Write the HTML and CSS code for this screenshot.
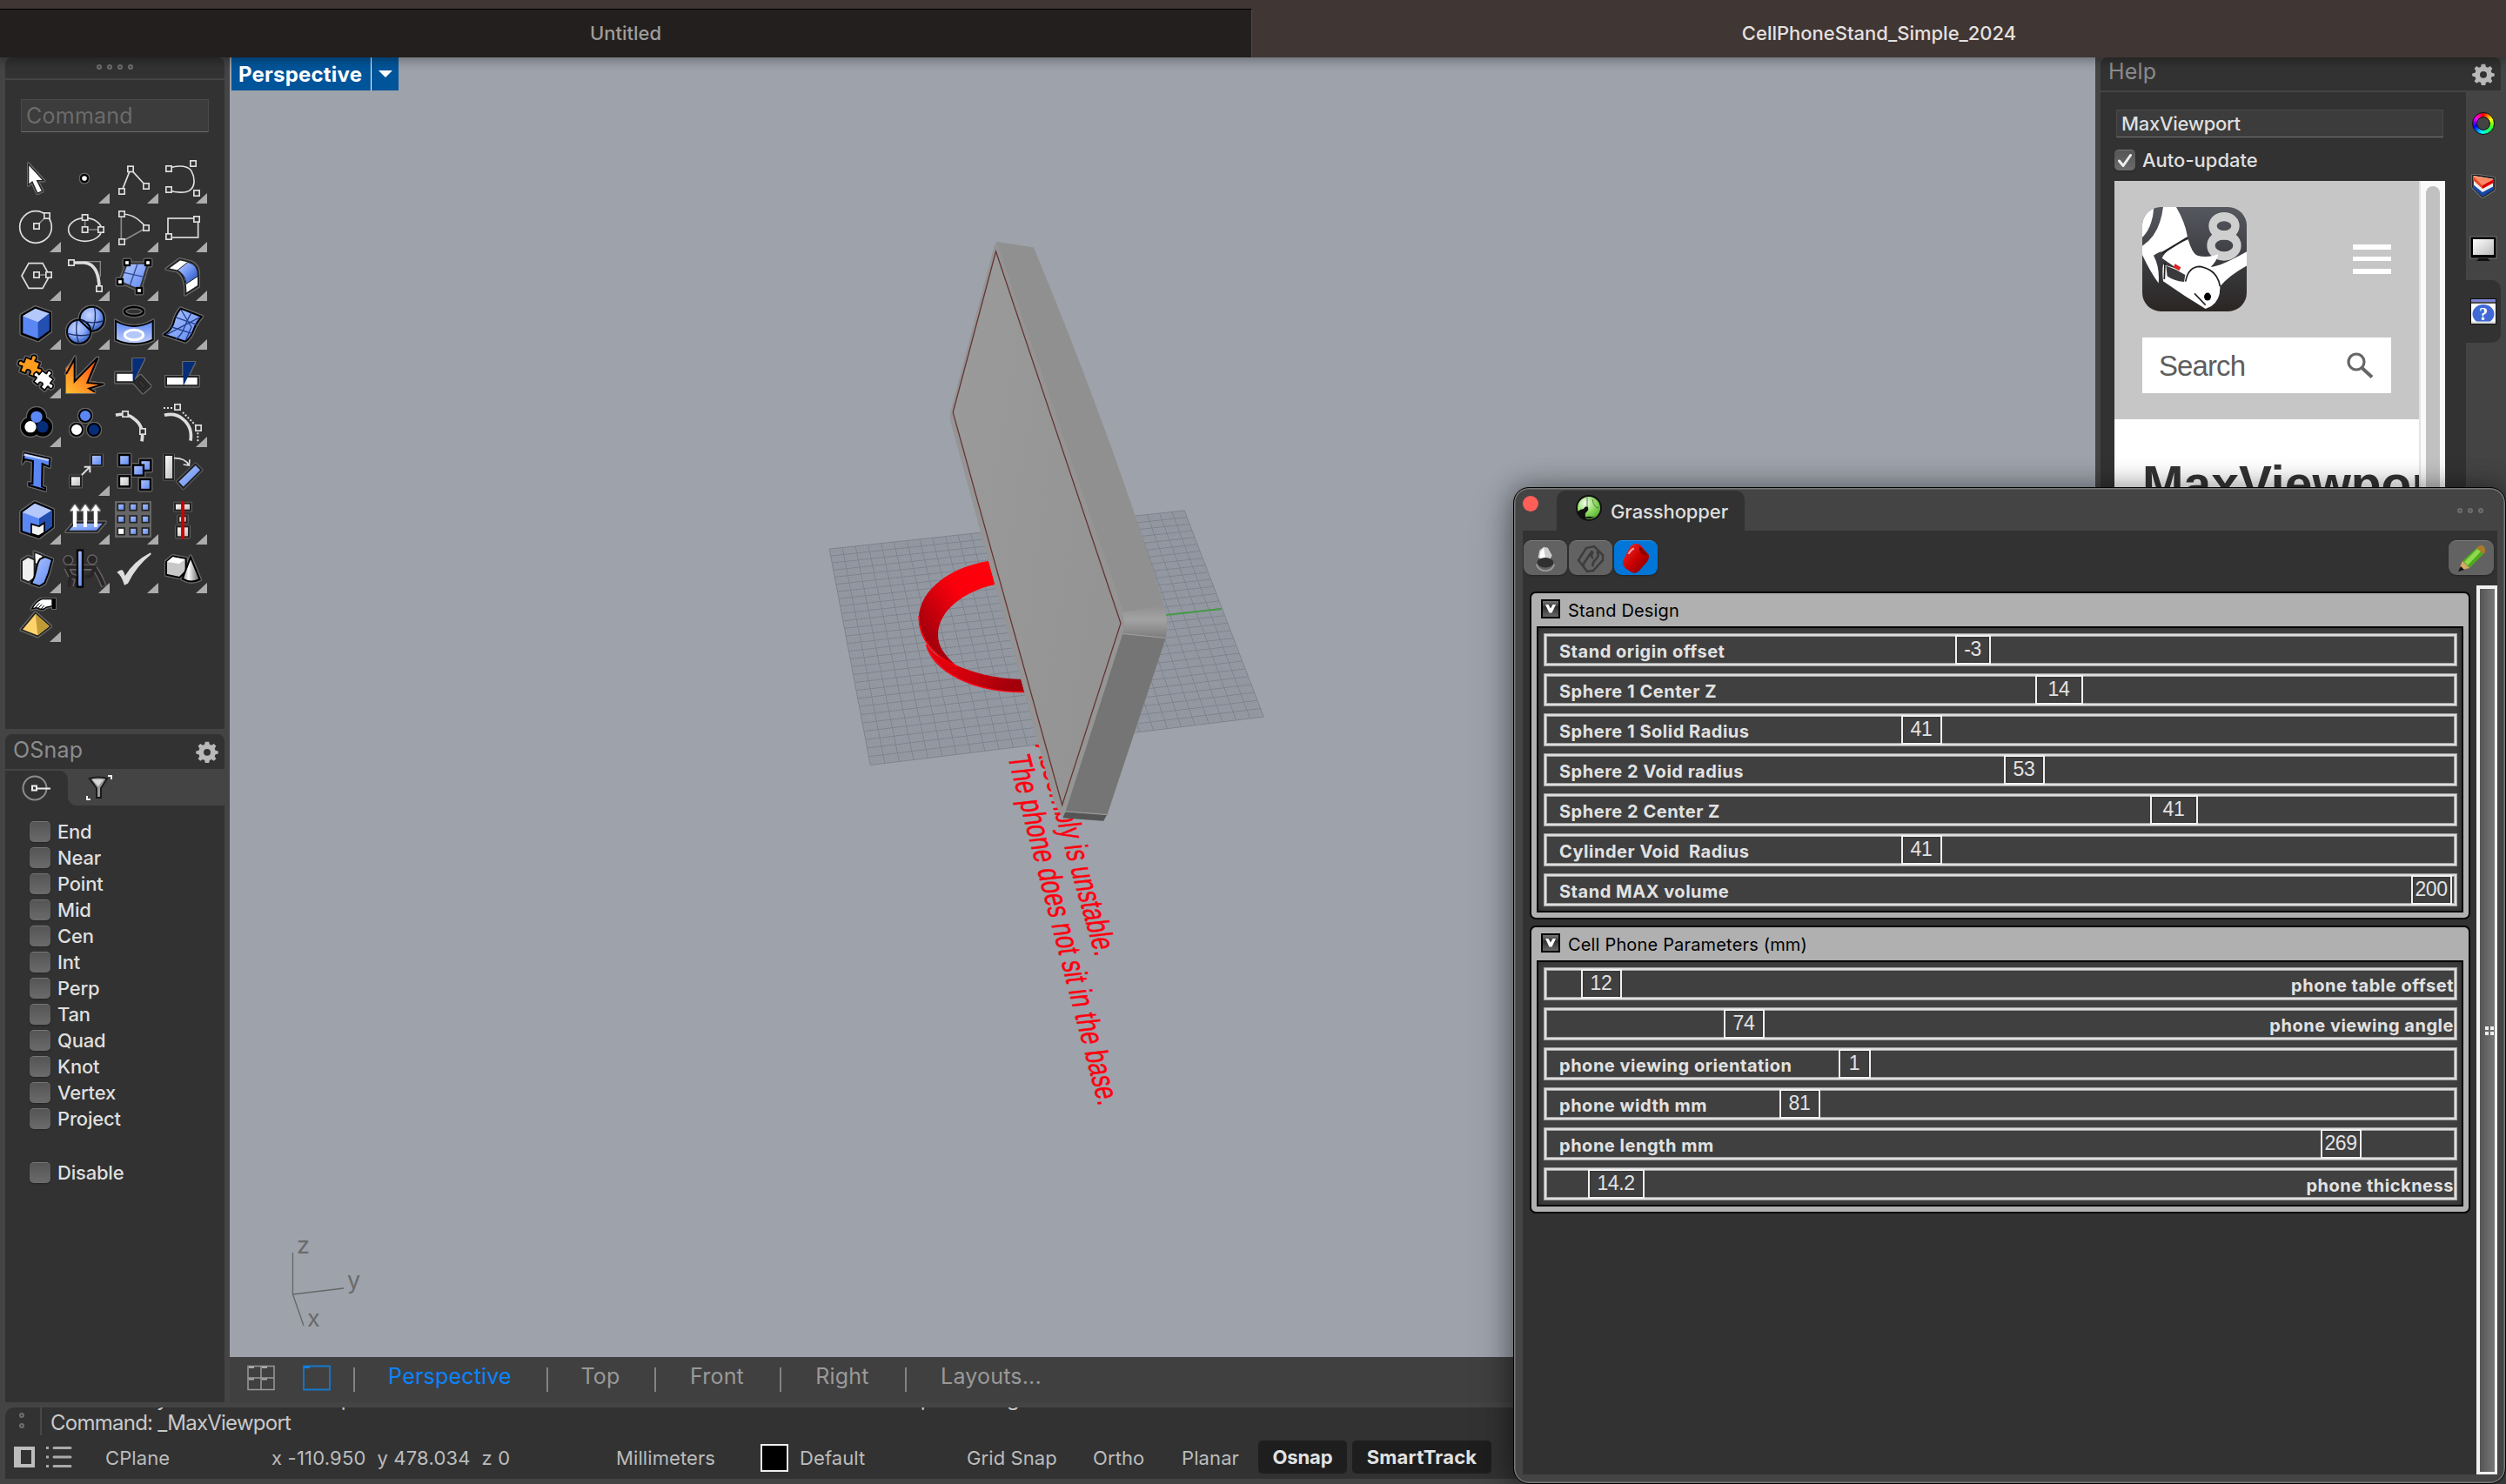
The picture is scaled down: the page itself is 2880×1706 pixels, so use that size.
FILE: index.html
```html
<!DOCTYPE html>
<html lang="en">
<head>
<meta charset="utf-8">
<title>CellPhoneStand_Simple_2024</title>
<link rel="stylesheet" href="styles.css">
</head>
<body>
<svg class="defs" width="0" height="0" aria-hidden="true">
  <defs>
    <rect id="n" x="-9.5" y="-9.5" width="19" height="19" fill="#323232" stroke="#dedede" stroke-width="5"/>
    <rect id="k" x="-9" y="-9" width="18" height="18" fill="#fff" stroke="#000" stroke-width="7"/>
    <linearGradient id="blue" x1="0" y1="0" x2="1" y2="1"><stop offset="0" stop-color="#b4c8fb"/><stop offset="1" stop-color="#5b87f5"/></linearGradient>
    <linearGradient id="bluev" x1="0" y1="0" x2="0" y2="1"><stop offset="0" stop-color="#5b87f5"/><stop offset="1" stop-color="#c4d2fb"/></linearGradient>
    <linearGradient id="deep" x1="0" y1="0" x2="1" y2="1"><stop offset="0" stop-color="#c4d2fb"/><stop offset=".5" stop-color="#6c92f3"/><stop offset="1" stop-color="#1d48a8"/></linearGradient>
    <radialGradient id="ball" cx=".4" cy=".35" r=".7"><stop offset="0" stop-color="#c8d6fd"/><stop offset=".5" stop-color="#8dabfa"/><stop offset="1" stop-color="#2450b4"/></radialGradient>
    <linearGradient id="grey" x1="0" y1="0" x2="1" y2="1"><stop offset="0" stop-color="#fff"/><stop offset="1" stop-color="#bbb"/></linearGradient>
    <linearGradient id="cone" x1="0" y1="0" x2="1" y2="0"><stop offset="0" stop-color="#888"/><stop offset=".35" stop-color="#fff"/><stop offset="1" stop-color="#555"/></linearGradient>
    <linearGradient id="fire" x1="0" y1="1" x2="1" y2="0"><stop offset="0" stop-color="#ffc030"/><stop offset=".5" stop-color="#ff7a20"/><stop offset="1" stop-color="#f03010"/></linearGradient>
    <path id="piece" d="M-24-24H-8C-3-24-11-32-7-37C-4-41 4-41 7-37C11-32 3-24 8-24H24V-8C24-3 32-11 37-7C41-4 41 4 37 7C32 11 24 3 24 8V24H8C3 24 10 16 6 12C3 9-3 9-6 12C-10 16-3 24-8 24H-24V8C-24 3-32 11-37 7C-41 4-41-4-37-7C-32-11-24-3-24-8Z"/>
    <path id="chev" d="M0 0h3.500L6 4.500 8.500 0H12L7.500 9.500h-3z"/>
  </defs>
</svg>

<header class="titlebar">
  <div class="doc-tab doc-tab-idle">Untitled</div>
  <div class="doc-tab">CellPhoneStand_Simple_2024</div>
</header>

<main class="workspace">
  <aside class="left">
    <section class="panel tools">
      <div class="grip"><i></i><i></i><i></i><i></i></div>
      <div class="tools-body">
        <div class="cmd-input">Command</div>
        <div class="tool-grid">
          <div class="tool"><svg viewBox="42 534 168 168" class="halo"><path d="M98 566v72l13-11 18 40 17-8-18-36h22z" fill="#fff" stroke="#222" stroke-width="4"/></svg></div>
          <div class="tool more"><svg viewBox="210 534 168 168" class="halo"><circle cx="291" cy="615" r="12" fill="#fff" stroke="#000" stroke-width="7"/></svg></div>
          <div class="tool more"><svg viewBox="378 534 168 168"><path d="M420 659l30-76 54 59" fill="none" stroke="#dedede" stroke-width="5"/><use href="#n" x="420" y="660"/><use href="#n" x="450" y="583"/><use href="#n" x="504" y="642"/></svg></div>
          <div class="tool more"><svg viewBox="546 534 168 168"><path d="M582 580C620 568 650 572 660 590C672 612 674 640 656 655C640 668 605 664 582 656" fill="none" stroke="#dedede" stroke-width="5"/><use href="#n" x="582" y="582"/><use href="#n" x="666" y="564"/><use href="#n" x="582" y="654"/><use href="#n" x="678" y="666"/></svg></div>

          <div class="tool more"><svg viewBox="42 702 168 168"><path d="M126 780l36-36" stroke="#888" stroke-width="5"/><circle cx="123" cy="783" r="55" fill="none" stroke="#dedede" stroke-width="5"/><use href="#n" x="126" y="780"/><use href="#n" x="162" y="744"/></svg></div>
          <div class="tool more"><svg viewBox="210 702 168 168"><ellipse cx="293" cy="792" rx="57" ry="40" fill="none" stroke="#dedede" stroke-width="5"/><path d="M293 750v42h54" fill="none" stroke="#888" stroke-width="5"/><use href="#n" x="293" y="750"/><use href="#n" x="293" y="792"/><use href="#n" x="348" y="792"/></svg></div>
          <div class="tool more"><svg viewBox="378 702 168 168"><path d="M418 738v96l86-48" fill="none" stroke="#888" stroke-width="5"/><path d="M420 738Q470 738 504 786" fill="none" stroke="#dedede" stroke-width="5"/><use href="#n" x="420" y="738"/><use href="#n" x="420" y="834"/><use href="#n" x="504" y="786"/></svg></div>
          <div class="tool more"><svg viewBox="546 702 168 168"><rect x="579" y="753" width="104" height="66" fill="none" stroke="#dedede" stroke-width="5"/><use href="#n" x="678" y="756"/><use href="#n" x="582" y="816"/></svg></div>

          <div class="tool more"><svg viewBox="42 870 168 168"><path d="M75 951l24-43h48l24 43-24 43H99z" fill="none" stroke="#dedede" stroke-width="5"/><path d="M126 948h40" stroke="#888" stroke-width="5"/><use href="#n" x="126" y="948"/><use href="#n" x="168" y="948"/></svg></div>
          <div class="tool more"><svg viewBox="210 870 168 168"><path d="M290 902h56v52" fill="none" stroke="#888" stroke-width="4"/><path d="M246 906h44Q342 910 342 996" fill="none" stroke="#dedede" stroke-width="11"/><use href="#n" x="246" y="906"/><use href="#n" x="342" y="996"/></svg></div>
          <div class="tool more"><svg viewBox="378 870 168 168" class="halo"><path d="M438 908h72l-28 92-68-28z" fill="url(#blue)" stroke="#333" stroke-width="6"/><path d="M474 910l-26 74M428 940l72 16" stroke="#334a90" stroke-width="4"/><use href="#k" x="438" y="906"/><use href="#k" x="510" y="906"/><use href="#k" x="414" y="972"/><use href="#k" x="480" y="1002"/></svg></div>
          <div class="tool more"><svg viewBox="546 870 168 168" class="halo"><path d="M577 927L620 895L658 904Q685 916 684 950V986L640 1014Q642 950 612 934Z" fill="#fff" stroke="#222" stroke-width="6"/><path d="M612 932L648 904Q684 914 682 953L642 979Q640 948 612 932z" fill="url(#deep)" stroke="#222" stroke-width="3"/></svg></div>

          <div class="tool more"><svg viewBox="42 1038 168 168" class="halo"><path d="M75 1088l47-27 51 19v61l-42 31-56-21z" fill="#5b87f5" stroke="#000" stroke-width="8"/><path d="M78 1090l44-26 48 17-39 30z" fill="#b4c8fb"/><path d="M131 1111l39-30v58l-39 29z" fill="#234fb0"/></svg></div>
          <div class="tool more"><svg viewBox="210 1038 168 168" class="halo"><circle cx="317" cy="1100" r="42" fill="url(#ball)" stroke="#000" stroke-width="6"/><circle cx="272" cy="1144" r="41" fill="url(#ball)" stroke="#000" stroke-width="6"/><path d="M274 1104l42 40" stroke="#000" stroke-width="6"/><path d="M278 1105q40 14 78 2M326 1060q8 40-8 80M232 1150q40 12 78 4M266 1106q-8 40 6 78" fill="none" stroke="#1b2f66" stroke-width="4"/></svg></div>
          <div class="tool more"><svg viewBox="378 1038 168 168" class="halo"><ellipse cx="462" cy="1074" rx="33" ry="15" fill="none" stroke="#000" stroke-width="7"/><path d="M399 1107q63 36 128 0v65q-63 28-128 0z" fill="url(#bluev)" stroke="#000" stroke-width="6"/><ellipse cx="462" cy="1155" rx="32" ry="17" fill="#b4c8fb" stroke="#fff" stroke-width="9"/></svg></div>
          <div class="tool more"><svg viewBox="546 1038 168 168" class="halo"><path d="M623 1064l72 28q-20 24-26 42-10 30-30 44l-72-24q26-18 32-42 6-26 24-48z" fill="url(#blue)" stroke="#000" stroke-width="6"/><path d="M660 1078q-14 24-24 50-8 26-30 42M604 1094l76 26M592 1128l70 22M690 1094l-116 60M624 1068l36 60-20 46" fill="none" stroke="#23408c" stroke-width="4"/></svg></div>

          <div class="tool more"><svg viewBox="42 6 168 168" class="halo"><g stroke="#000" stroke-width="5"><use href="#piece" fill="#ff9d1e" transform="translate(104 66) rotate(22) scale(1.08)"/><use href="#piece" fill="#fff" transform="translate(150 112) rotate(38)"/></g></svg></div>
          <div class="tool"><svg viewBox="210 6 168 168" class="halo"><path d="M228 156V72l30-36-2 78 84-84-34 86 54 8-50 16 18 16z" fill="url(#fire)"/><path d="M228 90l29-52v78l80-82-36 86 56 5-50 15 20 12" fill="none" stroke="#000" stroke-width="6"/></svg></div>
          <div class="tool"><svg viewBox="378 6 168 168" class="halo"><path d="M400 86h62v32h-62z" fill="#fff" stroke="#222" stroke-width="6"/><path d="M485 96l32 36-24 22-32-36zM485 108l20 24-11 10-20-24z" fill="#323232" stroke="#222" stroke-width="5"/><path d="M457 36h42l-41 84z" fill="#052d78"/></svg></div>
          <div class="tool"><svg viewBox="546 6 168 168" class="halo"><path d="M573 99h110v31H573z" fill="#fff" stroke="#222" stroke-width="6"/><path d="M631 48h42l-41 84z" fill="#052d78"/></svg></div>

          <div class="tool more"><svg viewBox="42 174 168 168" class="halo"><g fill="#000"><circle cx="126" cy="238" r="33"/><circle cx="105" cy="272" r="33"/><circle cx="147" cy="272" r="33"/></g><circle cx="105" cy="272" r="20" fill="#fff"/><circle cx="147" cy="272" r="20" fill="#052d78"/><circle cx="126" cy="238" r="20" fill="#5b87f5"/></svg></div>
          <div class="tool"><svg viewBox="210 174 168 168" class="halo"><g stroke="#000" stroke-width="6"><circle cx="294" cy="234" r="21" fill="#5b87f5"/><circle cx="264" cy="282" r="21" fill="#fff"/><circle cx="324" cy="282" r="21" fill="#052d78"/></g></svg></div>
          <div class="tool"><svg viewBox="378 174 168 168"><path d="M399 232q36-10 60 10 40 26 30 80" fill="none" stroke="#dedede" stroke-width="11"/><use href="#n" x="432" y="228"/><use href="#n" x="492" y="288"/></svg></div>
          <div class="tool more"><svg viewBox="546 174 168 168"><path d="M567 232q36-10 62 12 36 28 28 76" fill="none" stroke="#dedede" stroke-width="11"/><path d="M564 207h36M630 222l50 50M682 292v36" fill="none" stroke="#dedede" stroke-width="6" stroke-dasharray="6 6"/><use href="#n" x="612" y="204"/><use href="#n" x="684" y="276"/></svg></div>

          <div class="tool"><svg viewBox="42 342 168 168" class="halo"><path d="M84 362l88 20-2 28-24-10-2 78 12 4v8l-56-16v-8l12 2 2-78-28-6-6 8z" fill="#5b87f5" stroke="#000" stroke-width="6"/><path d="M84 364l86 20-4 6-84-18z" fill="#c4d2fb"/></svg></div>
          <div class="tool more"><svg viewBox="210 342 168 168"><g class="halo"><rect x="243" y="442" width="36" height="36" fill="url(#grey)" stroke="#222" stroke-width="6"/><rect x="315" y="369" width="36" height="36" fill="url(#blue)" stroke="#222" stroke-width="6"/></g><path d="M282 438l28-28M290 410h20v20" fill="none" stroke="#dedede" stroke-width="6"/></svg></div>
          <div class="tool"><svg viewBox="378 342 168 168" class="halo"><g stroke="#000" stroke-width="7" fill="url(#blue)"><rect x="411" y="369" width="36" height="36"/><rect x="484" y="387" width="36" height="36"/><rect x="459" y="404" width="36" height="36"/><rect x="411" y="442" width="36" height="36" fill="url(#grey)"/><rect x="483" y="453" width="36" height="36"/></g></svg></div>
          <div class="tool"><svg viewBox="546 342 168 168"><g class="halo" stroke="#222" stroke-width="6"><path d="M567 369h30v84h-30z" fill="url(#grey)"/><path d="M674 401l20 20-62 62-20-22z" fill="url(#blue)"/></g><path d="M600 380q40 0 50 24M632 402l20 3 2-20" fill="none" stroke="#dedede" stroke-width="5"/></svg></div>

          <div class="tool more"><svg viewBox="42 510 168 168" class="halo"><path d="M74 566l46-33 62 26v58l-48 36-60-20z" fill="#5b87f5" stroke="#000" stroke-width="7"/><path d="M77 567l43-31 58 24-44 28z" fill="#b4c8fb"/><path d="M135 588l44-28v56l-44 34z" fill="#234fb0"/><path d="M108 607l27 8 18-12v34l-20 12-25-8z" fill="#f2f2f2" stroke="#000" stroke-width="5"/></svg></div>
          <div class="tool more"><svg viewBox="210 510 168 168" class="halo"><path d="M232 632l26-30h102l-26 30z" fill="url(#blue)" stroke="#222" stroke-width="6"/><path d="M252 618v-56h-10l16-22 16 22h-10v56zM288 618v-56h-10l16-22 16 22h-10v56zM324 618v-56h-10l16-22 16 22h-10v56z" fill="#fff"/></svg></div>
          <div class="tool more"><svg viewBox="378 510 168 168"><rect x="396" y="528" width="126" height="126" fill="#666"/><g fill="url(#blue)" stroke="#222" stroke-width="5"><rect x="406" y="537" width="23" height="23"/><rect x="448" y="537" width="23" height="23"/><rect x="490" y="537" width="23" height="23"/><rect x="406" y="579" width="23" height="23"/><rect x="448" y="579" width="23" height="23"/><rect x="490" y="579" width="23" height="23"/><rect x="406" y="621" width="23" height="23" fill="#fff"/><rect x="448" y="621" width="23" height="23"/><rect x="490" y="621" width="23" height="23"/></g></svg></div>
          <div class="tool more"><svg viewBox="546 510 168 168"><g class="halo" fill="url(#grey)" stroke="#222" stroke-width="6"><rect x="603" y="536" width="54" height="24"/><rect x="616" y="580" width="28" height="22"/><rect x="609" y="616" width="42" height="36"/></g><path d="M624 528h12v132h-12z" fill="#c00"/></svg></div>

          <div class="tool more"><svg viewBox="42 678 168 168" class="halo"><path d="M119 704l30 12-14 36-16-10z" fill="#fff" stroke="#222" stroke-width="5"/><path d="M75 734l22-14 22 10v64l-20 14-24-10z" fill="#f0f0f0" stroke="#222" stroke-width="6"/><path d="M138 728l18-8 24 10q-6 20-12 44l-14 36-18 12-28-10q12-20 16-44 4-26 14-40z" fill="url(#blue)" stroke="#000" stroke-width="6"/></svg></div>
          <div class="tool more"><svg viewBox="210 678 168 168"><g stroke="#666" stroke-width="20" fill="none"><path d="M230 758l14 28 24 8-8 30M228 756l98 2 18 30 14 34"/></g><circle cx="235" cy="732" r="18" fill="#666"/><circle cx="318" cy="730" r="18" fill="#666"/><path d="M230 758l14 28 24 8-8 30M228 756h98l-12 30-20 4M326 758l16 28 16 34M242 790l-4 34" stroke="#2a2526" stroke-width="12" fill="none"/><circle cx="235" cy="732" r="14" fill="#2a2526"/><circle cx="318" cy="730" r="14" fill="#2a2526"/><path d="M267 698h18v126h-18z" fill="url(#blue)" stroke="#000" stroke-width="7"/></svg></div>
          <div class="tool more"><svg viewBox="378 678 168 168"><path d="M403 774q10-10 18-8 6 4 10 20 30-50 88-80l2 6q-50 40-80 100l-12 6q-10-34-26-44z" fill="#dedede"/></svg></div>
          <div class="tool more"><svg viewBox="546 678 168 168" class="halo"><path d="M573 738l22-20 46 8v44l-22 22-46-10z" fill="#c8c8c8" stroke="#000" stroke-width="6"/><path d="M575 738l20-17 43 8-20 15z" fill="#fff"/><path d="M657 722l32 76q-30 16-60-2z" fill="url(#cone)" stroke="#000" stroke-width="6"/></svg></div>

          <div class="tool more"><svg viewBox="42 846 168 168" class="halo"><path d="M110 900q14-26 34-34h36v24l-20 4q-14 14-34 2z" fill="#fff" stroke="#000" stroke-width="4"/><path d="M120 898l16-18M130 900l14-16M142 900l10-12" stroke="#000" stroke-width="3"/><path d="M180 864h12v36h-12z" fill="#000"/><path d="M122 914l52 46-44 34-56-22z" fill="#ffd36b" stroke="#222" stroke-width="5"/><path d="M122 916l48 44-40 30z" fill="#c09a35"/></svg></div>
        </div>
      </div>
    </section>

    <section class="panel osnap">
      <div class="panel-head"><span>OSnap</span><svg class="gear" viewBox="-15 -14 30 30"><path fill="#b9b9b9" d="M-2.500-12h5l.8 3.500 2.600 1.100L9-9.300l3 3-2 3.200 1.100 2.600 3.600.8v3.600l-3.600.8L10 7.300l2 3.100-3 3-3.100-2-2.600 1.100-.8 3.500h-5l-.8-3.500-2.600-1.100-3.100 2-3-3 2-3.100-1.100-2.600-3.600-.8V.3l3.600-.8L-10-3.100l-2-3.200 3-3 3.100 1.900 2.600-1.100z"/><circle cy="2" r="4.600" fill="#323232"/></svg></div>
      <div class="osnap-tabs">
        <div class="osnap-tab"><svg width="34" height="30" viewBox="0 0 34 30"><circle cx="15" cy="15" r="13.500" fill="none" stroke="#8c8c8c" stroke-width="2"/><path d="M16 15.500h17" stroke="#eee" stroke-width="2"/><rect x="12" y="12.500" width="5" height="5" fill="#323232" stroke="#eee" stroke-width="2"/></svg></div>
        <div class="osnap-tab-idle"><svg width="30" height="30" viewBox="0 0 30 30"><path d="M25 1h4v4M1 24v4h4" fill="none" stroke="#eee" stroke-width="2"/><path d="M4 4q10-3 20 0l-7 11v11h-5V15z" fill="#9a9a9a" stroke="#1a1a1a" stroke-width="2"/><path d="M7 5h13l-6 8z" fill="#d8d8d8"/></svg></div>
      </div>
      <ul class="snaps">
        <li><i></i>End</li><li><i></i>Near</li><li><i></i>Point</li><li><i></i>Mid</li><li><i></i>Cen</li><li><i></i>Int</li>
        <li><i></i>Perp</li><li><i></i>Tan</li><li><i></i>Quad</li><li><i></i>Knot</li><li><i></i>Vertex</li><li><i></i>Project</li>
        <li class="disable"><i></i>Disable</li>
      </ul>
    </section>
  </aside>

  <section class="center">
    <div class="viewport">
      <svg class="scene" viewBox="264 66 2144 1494">
        <defs>
          <linearGradient id="face" x1="0" y1="0" x2="1" y2=".5"><stop offset="0" stop-color="#9b9b9b"/><stop offset=".5" stop-color="#979797"/><stop offset="1" stop-color="#949494"/></linearGradient>
          <linearGradient id="fillet" x1="0" y1="0" x2="0" y2="1"><stop offset="0" stop-color="#8f8f8f"/><stop offset=".45" stop-color="#a3a3a3"/><stop offset="1" stop-color="#7c7c7c"/></linearGradient>
          <linearGradient id="ring" x1=".9" y1="0" x2=".15" y2=".75"><stop offset="0" stop-color="#ff000c"/><stop offset=".45" stop-color="#fa000c"/><stop offset="1" stop-color="#a6000c"/></linearGradient>
          <linearGradient id="ring2" x1="0" y1="0" x2="1" y2=".6"><stop offset="0" stop-color="#f0000c"/><stop offset=".6" stop-color="#d0000c"/><stop offset="1" stop-color="#a4000c"/></linearGradient>
        </defs>
        <path class="ground" d="M953.200 631.100L1361.100 587L1452.200 824L1000.300 879.500Z"/>
        <path class="grid-minor"/>
        <path class="grid-major"/>
        <path d="M1338 707.300L1403.600 700" stroke="#469a46" stroke-width="2"/>
        <path d="M1136 645C1095 651 1056 677 1056 711C1056 737 1076 756 1100 766C1086 754 1078 743 1078 730C1078 701 1110 679 1143.500 672Z" fill="url(#ring)"/>
        <path d="M1064.500 739C1073 772 1118 796 1177.500 795.500L1173.600 781C1142 780 1117 773 1097 764C1080 757 1070 750 1064.500 739Z" fill="url(#ring2)"/>
        <path d="M1056 708C1056 737 1076 756 1100 766M1064.500 741C1073 772 1118 796 1177.500 795.500" fill="none" stroke="#ff0010" stroke-width="1.500"/>
        <text class="warn" transform="matrix(.181 .697 -.993 .11 1158 869)">The phone does not sit in the base.</text>
        <text class="warn" transform="matrix(.193 .682 -.993 .11 1190 856)">Assembly is unstable.</text>
        <path d="M1145.700 278L1187.800 284.400C1230 385 1290 540 1337.800 695.400Q1343 714 1339.700 733.500L1272.300 936L1268.100 943.800L1221.400 940.200L1211.900 922.700L1093.200 486.500Q1091.500 480 1092.100 475L1141.800 286.700Q1143 280 1145.700 278Z" fill="#909090"/>
        <path d="M1145.700 278L1148.500 287L1291 703L1291.500 727L1224.500 933.300L1221.400 940.200L1211.900 922.700L1093.200 486.500Q1091.500 480 1092.100 475L1141.800 286.700Z" fill="#959595"/>
        <path d="M1144.500 289L1095.200 474.100L1220.700 925.500L1288 716.500Z" fill="url(#face)" stroke="#663535" stroke-width="1.300"/>
        <path d="M1290 704L1337.800 695.400Q1343 714 1339.700 733.500L1290.300 728.500Q1293 716 1290 704Z" fill="url(#fillet)"/>
        <path d="M1290.300 728.500L1339.700 733.500L1272.300 937L1224.500 933.300Z" fill="#757575"/>
        <path d="M1224.500 933.300L1272 937L1268.100 943.800L1221.400 940.200Z" fill="#555"/>
        <path d="M1290.300 728.500L1339.700 733.500M1224.500 932.800L1272 936.500" stroke="#a2a2a2" stroke-width="1"/>
        <path d="M336.500 1440V1488L395 1481M336.500 1488L349 1524" fill="none" stroke="#666" stroke-width="1.300"/>
        <g class="axis"><text x="341" y="1441">z</text><text x="399" y="1481">y</text><text x="353" y="1525">x</text></g>
      </svg>
      <div class="view-label"><b>Perspective</b><span><svg width="16" height="8" viewBox="0 0 16 8"><path d="M0 0h16L8 8z" fill="#fff"/></svg></span></div>
    </div>
    <nav class="view-tabs">
      <svg class="vt-icon" width="32" height="30" viewBox="0 0 32 30"><path d="M1 1.500h30v27H1zM16 1v28M1 15h30" fill="none" stroke="#999" stroke-width="1.500"/><path d="M2 3h6M17 3h6M2 16.500h6M17 16.500h6" stroke="#aaa" stroke-width="2"/></svg>
      <svg class="vt-icon blue" width="32" height="30" viewBox="0 0 32 30"><path d="M1 1.500h30v27H1z" fill="none" stroke="#1478cc" stroke-width="1.800"/><path d="M2 3h6" stroke="#0a84ff" stroke-width="2"/></svg>
      <i></i><span class="on">Perspective</span><i></i><span>Top</span><i></i><span>Front</span><i></i><span>Right</span><i></i><span>Layouts...</span>
    </nav>
  </section>

  <aside class="right">
    <div class="panel-head help-head"><span>Help</span><svg class="gear" viewBox="-15 -14 30 30"><path fill="#b9b9b9" d="M-2.500-12h5l.8 3.500 2.600 1.100L9-9.300l3 3-2 3.200 1.100 2.600 3.600.8v3.600l-3.600.8L10 7.300l2 3.100-3 3-3.100-2-2.600 1.100-.8 3.500h-5l-.8-3.500-2.600-1.100-3.100 2-3-3 2-3.100-1.100-2.600-3.600-.8V.3l3.600-.8L-10-3.100l-2-3.200 3-3 3.100 1.900 2.600-1.100z"/><circle cy="2" r="4.600" fill="#323232"/></svg></div>
    <div class="help">
      <div class="help-body">
        <div class="help-input">MaxViewport</div>
        <div class="auto"><i><svg width="16" height="15" viewBox="0 0 16 15"><path d="M1.500 8l4.500 5.500L14.500 1.500" fill="none" stroke="#eee" stroke-width="3" stroke-linecap="round"/></svg></i>Auto-update</div>
        <div class="web">
          <div class="page">
            <div class="page-head">
              <div class="brand">
                <svg width="120" height="120" viewBox="186 643 360 325" preserveAspectRatio="none">
                  <defs><linearGradient id="lg" x1="0" y1="0" x2="0" y2="1"><stop offset="0" stop-color="#56585f"/><stop offset=".5" stop-color="#3c3d42"/><stop offset="1" stop-color="#2a2624"/></linearGradient><clipPath id="lc"><rect x="186" y="643" width="360" height="325" rx="64" ry="58"/></clipPath></defs>
                  <g clip-path="url(#lc)">
                    <rect x="186" y="643" width="360" height="325" fill="url(#lg)"/>
                    <g fill="none" stroke="#cfcfcf" stroke-width="28"><ellipse cx="468" cy="702" rx="39" ry="29"/><ellipse cx="468" cy="763" rx="45" ry="33"/></g>
                    <path d="M186 643h40Q222 705 186 738z" fill="#fff"/>
                    <path d="M258 643h45q32 50 39 93L255 782q-10 0-30 12 22 38 17 86-28-34-56-88v-28Q246 730 258 643z" fill="#fff"/>
                    <path d="M344 744q14 44 32 50 34 8 72-4-4 20-26 40 34-2 124-48v44q-60 30-92 64 2 42-30 62l-20 8Q330 920 258 874q-4-30 0-52l50 14-54-34q14-30 90-58z" fill="#fff"/>
                    <path d="M268 826l34 12 32 16-4 22q-36-4-58-18z" fill="#3a3a3c"/>
                    <path d="M335 875Q345 828 385 828Q445 838 454 890M264 816l-2 52M342 738L254 788" fill="none" stroke="#222" stroke-width="5"/>
                    <path d="M366 912l38 36" stroke="#222" stroke-width="5"/><circle cx="411" cy="922" r="12" fill="#000"/>
                    <path d="M296 825l20 11" stroke="#d22" stroke-width="12"/>
                  </g>
                </svg>
                <svg class="burger" width="44" height="34" viewBox="0 0 44 34"><path d="M0 0h44v6H0zM0 14h44v5H0zM0 28h44v6H0z" fill="#fff"/></svg>
              </div>
              <div class="search"><span>Search</span><svg width="30" height="30" viewBox="0 0 30 30"><circle cx="11" cy="11" r="9" fill="none" stroke="#666" stroke-width="3.200"/><path d="M17.500 18L29 28.500" stroke="#666" stroke-width="4"/></svg></div>
            </div>
            <h1>MaxViewport</h1>
          </div>
          <div class="sbar"><i></i></div>
        </div>
      </div>
      <div class="side-tabs">
        <div><span class="wheel"></span></div>
        <div><svg width="26" height="26" viewBox="0 0 26 26" class="halo"><path d="M1 0l24 4v13L12 25 1 14z" fill="#eee" stroke="#111" stroke-width="1.500"/><path d="M1 1l24 4-13 7z" fill="#ff8a66"/><path d="M1 1l11 11v4L1 6z" fill="#e84a20"/><path d="M12 12l13-7v4l-13 7z" fill="#d00"/><path d="M1 11l11 9v5L1 15zM12 20l13-7v4l-13 8z" fill="#1747a6"/></svg></div>
        <div><svg width="32" height="31" viewBox="0 0 32 31"><rect x="1" y="1" width="30" height="25" fill="#000" stroke="#777"/><rect x="4" y="4" width="24" height="18" fill="url(#grey)"/><path d="M11 26h10l3 3H8z" fill="#111"/></svg></div>
        <div class="active"><svg width="30" height="30" viewBox="0 0 30 30"><rect x=".5" y=".5" width="29" height="29" fill="#fff" stroke="#111"/><rect x="1" y="1" width="28" height="3" fill="#7d83d6"/><path d="M1 5h28" stroke="#111" stroke-width="1.500"/><ellipse cx="15" cy="18" rx="12.500" ry="11" fill="#3f6ad6"/><rect x="1" y="26.500" width="28" height="2.500" fill="#ddd"/><text x="15" y="25" text-anchor="middle" class="q">?</text></svg></div>
      </div>
    </div>
  </aside>
</main>

<footer class="bottom">
  <div class="history">
    <div class="hgrip"><i></i><i></i></div>
    <div class="lines">
      <div class="old"><span>y</span><span>p</span><span>_</span><span>_Simple_Design</span></div>
      <div class="cur">Command: _MaxViewport</div>
    </div>
  </div>
  <div class="status">
    <svg class="s-pane" width="24" height="24" viewBox="0 0 24 24"><path d="M0 0h24v24H0zM8 4v16h12V4z" fill="#bdbdbd" fill-rule="evenodd"/></svg>
    <svg class="s-list" width="30" height="28" viewBox="0 0 30 28"><path d="M9 3.500h19M9 14h19M9 24.500h19" stroke="#aaa" stroke-width="3" stroke-linecap="round"/><path d="M0 3.500h3M0 14h3M0 24.500h3" stroke="#aaa" stroke-width="3"/></svg>
    <span class="s-cplane">CPlane</span><span class="s-xyz">x -110.950&nbsp; y 478.034&nbsp; z 0</span><span class="s-mm">Millimeters</span>
    <span class="s-layer"><i></i>Default</span><span class="s-grid">Grid Snap</span><span class="s-ortho">Ortho</span><span class="s-planar">Planar</span>
    <b class="s-osnap">Osnap</b><b class="s-smart">SmartTrack</b>
  </div>
</footer>

<section class="window">
  <div class="w-title">
    <i class="close"></i>
    <div class="w-tab">
      <svg width="32" height="32" viewBox="0 0 32 32"><defs><radialGradient id="gh" cx=".35" cy=".3" r=".8"><stop offset="0" stop-color="#f4fff0"/><stop offset=".5" stop-color="#8fdc60"/><stop offset="1" stop-color="#4ca52a"/></radialGradient></defs><circle cx="16" cy="16" r="14" fill="url(#gh)" stroke="#111" stroke-width="2"/><path d="M3 20q4-3 7-3 2-4 5-2 1 3-1 5-3 2-2 5 0 3 3 4Q5 29 3 20zM11 27q5-2 8-1 2 1 5-1-5 5-13 2z" fill="#111"/><path d="M14 4v11M20 6q2 10 7 10" stroke="#555" stroke-width=".8" fill="none"/></svg>
      Grasshopper
    </div>
    <div class="dots"><i></i><i></i><i></i></div>
  </div>
  <div class="w-body">
    <div class="w-tools">
      <button><svg width="28" height="34" viewBox="0 3 28 36"><path d="M5 20l2-9 5-4 5 1 5 9-2 5z" fill="#ccc"/><path d="M8 13l4-5 2 13-7 0z" fill="#fff"/><ellipse cx="14" cy="26" rx="10" ry="6" fill="#303030"/><path d="M3 28q3 8 11 8t11-8" fill="none" stroke="#999" stroke-width="2"/></svg></button>
      <button><svg width="34" height="34" viewBox="0 0 34 34"><path d="M3 19L12 5l9-2 10 10 0 6-11 12-7 1zM11 20l8-12M11 20q-4 4-1 8M24 9q4 4-1 9t-3 8M20 9q-4 6 0 8" fill="none" stroke="#3c3c3c" stroke-width="2.500"/></svg></button>
      <button class="sel"><svg width="34" height="38" viewBox="1 0 32 36"><defs><linearGradient id="rd" x1="0" y1="0" x2="1" y2="1"><stop offset="0" stop-color="#e33"/><stop offset=".5" stop-color="#c00"/><stop offset="1" stop-color="#700"/></linearGradient></defs><path d="M3 20L11 5q2-2 5-3 5-1 8 4l7 8q1 4-2 8l-9 10q-4 3-8 1l-6-4q-4-4-3-9z" fill="url(#rd)"/><path d="M21 5q6 4 8 10l-5-1q-4-4-3-9z" fill="#800"/><path d="M9 13q3-5 6-6" stroke="#f99" stroke-width="2" fill="none"/></svg></button>
      <button class="pencil"><svg width="32" height="32" viewBox="0 0 32 32"><path d="M6 19L22 4l8 7-16 16z" fill="#4fa81c"/><path d="M8 20L24 4l4 3-16 17z" fill="#8ed84c"/><path d="M22 4q6-6 9-1t-1 8z" fill="#a97b2e"/><path d="M6 19l8 8-8 2-3-3z" fill="#d8a868"/><path d="M1 31l3-6 4 4z" fill="#111"/></svg></button>
    </div>
    <div class="w-content">
      <div class="groups">
        <div class="group">
          <div class="g-head"><i><svg width="12" height="10" viewBox="0 0 12 10"><use href="#chev" fill="#fff"/></svg></i><span>Stand Design</span></div>
          <div class="rows">
            <div class="row"><span>Stand origin offset</span><em style="left:473px;width:41px">-3</em></div>
            <div class="row"><span>Sphere 1 Center Z</span><em style="left:565px;width:55px">14</em></div>
            <div class="row"><span>Sphere 1 Solid Radius</span><em style="left:411px;width:47px">41</em></div>
            <div class="row"><span>Sphere 2 Void radius</span><em style="left:529px;width:47px">53</em></div>
            <div class="row"><span>Sphere 2 Center Z</span><em style="left:697px;width:55px">41</em></div>
            <div class="row"><span>Cylinder Void&nbsp; Radius</span><em style="left:411px;width:47px">41</em></div>
            <div class="row"><span>Stand MAX volume</span><em style="left:997px;width:47px">200</em></div>
          </div>
        </div>
        <div class="group">
          <div class="g-head"><i><svg width="12" height="10" viewBox="0 0 12 10"><use href="#chev" fill="#fff"/></svg></i><span>Cell Phone Parameters (mm)</span></div>
          <div class="rows">
            <div class="row end"><span>phone table offset</span><em style="left:43px;width:47px">12</em></div>
            <div class="row end"><span>phone viewing angle</span><em style="left:207px;width:47px">74</em></div>
            <div class="row"><span>phone viewing orientation</span><em style="left:339px;width:37px">1</em></div>
            <div class="row"><span>phone width mm</span><em style="left:271px;width:47px">81</em></div>
            <div class="row"><span>phone length mm</span><em style="left:893px;width:47px">269</em></div>
            <div class="row end"><span>phone thickness</span><em style="left:51px;width:65px">14.2</em></div>
          </div>
        </div>
      </div>
      <div class="w-scroll"><i></i><i></i><i></i><i></i></div>
    </div>
  </div>
</section>
<script src="grid.js"></script>
</body>
</html>
```
FILE: grid.js
```js
// Projects the construction-plane grid onto its four screen corners.
(function () {
  var N = 28, SUB = 5;
  var p = [[953.2, 631.1], [1361.1, 587], [1452.2, 824], [1000.3, 879.5]];
  var dx1 = p[1][0] - p[2][0], dx2 = p[3][0] - p[2][0], sx = p[0][0] - p[1][0] + p[2][0] - p[3][0];
  var dy1 = p[1][1] - p[2][1], dy2 = p[3][1] - p[2][1], sy = p[0][1] - p[1][1] + p[2][1] - p[3][1];
  var den = dx1 * dy2 - dx2 * dy1;
  var g = (sx * dy2 - dx2 * sy) / den, h = (dx1 * sy - sx * dy1) / den;
  var a = p[1][0] - p[0][0] + g * p[1][0], b = p[3][0] - p[0][0] + h * p[3][0];
  var d = p[1][1] - p[0][1] + g * p[1][1], e = p[3][1] - p[0][1] + h * p[3][1];
  function pt(u, v) {
    var w = g * u + h * v + 1;
    return ((a * u + b * v + p[0][0]) / w).toFixed(1) + ' ' + ((d * u + e * v + p[0][1]) / w).toFixed(1);
  }
  var major = '', minor = '';
  for (var i = 0; i <= N * SUB; i++) {
    var t = i / (N * SUB);
    var s = 'M' + pt(t, 0) + 'L' + pt(t, 1) + 'M' + pt(0, t) + 'L' + pt(1, t);
    if (i % SUB) minor += s; else major += s;
  }
  document.querySelector('.grid-minor').setAttribute('d', minor);
  document.querySelector('.grid-major').setAttribute('d', major);
})();
```
FILE: styles.css
```css
* { box-sizing: border-box; }
body { margin: 0; width: 2880px; height: 1706px; overflow: hidden; display: flex; flex-direction: column; background: #444; color: #dfdfdf; font: 500 22px/30px Inter, "Liberation Sans", sans-serif; position: relative; }
svg { display: block; flex: none; }
i { font-style: normal; display: block; flex: none; }
.defs { position: absolute; }

.titlebar { height: 66px; flex: none; display: flex; background: #403634; position: relative; z-index: 2; box-shadow: 0 0 12px 3px rgba(0,0,0,.35); }
.doc-tab { flex: 1; padding-top: 13px; text-align: center; font-size: 22px; line-height: 50px; color: #e4e0df; }
.doc-tab-idle { margin-top: 10px; padding-top: 3px; flex: 0 0 1439px; background: #231f1e; border-top: 1px solid #000; color: #a09c9b; border-right: 1px solid #544a48; line-height: 48px; }

.workspace { height: 1546px; flex: none; display: flex; }
.left { width: 264px; padding: 0 6px; display: flex; flex-direction: column; gap: 6px; }
.panel { width: 252px; display: flex; flex-direction: column; gap: 2px; }
.grip { height: 24px; background: #323232; border-radius: 8px 8px 0 0; display: flex; justify-content: center; align-items: center; gap: 6px; padding-bottom: 2px; }
.grip i, .dots i, .hgrip i { width: 6px; height: 6px; border: 2px solid #6e6e6e; border-radius: 50%; }
.tools-body { height: 746px; background: #323232; padding: 22px 18px 0; }
.cmd-input { height: 38px; background: #3c3c3c; border: 1px solid #4a4a4a; border-bottom-color: #6a6a6a; color: #6b6b6b; font-size: 25px; line-height: 37px; padding-left: 5px; font-weight: 400; letter-spacing: .25px; }
.tool-grid { margin: 26px 0 0 -10px; display: grid; grid-template-columns: repeat(4, 56px); grid-auto-rows: 56px; }
.tool { position: relative; }
.tool svg { width: 56px; height: 56px; }
.more::after { content: ""; position: absolute; right: 0; bottom: 0; width: 13px; height: 12px; background: #acacac; clip-path: polygon(100% 0, 100% 100%, 0 100%); }
.halo { filter: drop-shadow(1px 0 0 #666) drop-shadow(-1px 0 0 #666) drop-shadow(0 1px 0 #666) drop-shadow(0 -1px 0 #666); }

.panel-head { height: 40px; background: #323232; border-radius: 8px 8px 0 0; display: flex; justify-content: space-between; align-items: center; padding: 0 7px 0 9px; color: #8c8c8c; font-size: 25px; font-weight: 400; letter-spacing: .2px; }
.panel-head span { position: relative; top: -2px; }
.gear { width: 26px; height: 26px; }
.osnap { flex: 1; gap: 0; }
.osnap-tabs { margin-top: 2px; height: 40px; display: flex; background: linear-gradient(#323232, #323232) 0 0/80px 100% no-repeat #444; }
.osnap-tab { width: 72px; background: #323232; border-radius: 0 10px 0 0; padding: 5px 0 0 19px; box-shadow: 8px -8px 0 #444; clip-path: inset(0 -8px 0 0); }
.osnap-tab-idle { flex: 1; background: #444; border-radius: 0 0 0 10px; padding: 5px 0 0 21px; }
.snaps { flex: 1; margin: 0; list-style: none; background: #323232; padding: 15px 0 0 28px; }
.snaps li { height: 30px; display: flex; align-items: center; gap: 8px; letter-spacing: -.2px; }
.snaps i, .auto i { width: 24px; height: 24px; border-radius: 5px; background: linear-gradient(#555, #6b6b6b); border-top: 1px solid #777; box-shadow: 0 1px 2px rgba(0,0,0,.3); }
.snaps .disable { margin-top: 32px; }

.center { width: 2144px; }
.viewport { position: relative; height: 1494px; background: #9da2ab; }
.scene { width: 2144px; height: 1494px; }
.ground { fill: #979ca5; }
.grid-minor { fill: none; stroke: #7c828c; stroke-width: .4; opacity: .45; }
.grid-major { fill: none; stroke: #7d838d; stroke-width: 1; }
.warn { font: 400 37px "Liberation Sans", sans-serif; fill: #ff0010; stroke: #ff0010; stroke-width: .5; }
.axis { font: 400 27px "Inter", sans-serif; fill: #6a6a6a; }
.view-label { position: absolute; left: 2px; top: 0; height: 38px; width: 192px; display: flex; background: #00559a; color: #fff; }
.view-label b { width: 161px; padding-left: 8px; font: 700 24px/39px Inter, sans-serif; border-right: 1px solid #fff; letter-spacing: .2px; }
.view-label span { flex: 1; display: grid; place-items: center; }
.view-tabs { height: 52px; background: #404040; display: flex; align-items: center; padding: 0 0 4px 20px; color: #999; font-size: 25px; font-weight: 400; letter-spacing: .2px; }
.view-tabs i { width: 2px; height: 28px; background: #838383; margin-top: 4px; }
.view-tabs span { text-align: center; padding: 0 2px 4px 0; width: 142px; }
.view-tabs span:nth-of-type(1) { width: 220px; }
.view-tabs span:nth-of-type(2) { width: 122px; }
.view-tabs span:nth-of-type(5) { width: 196px; }
.view-tabs .on { color: #0a84ff; }
.blue { margin: 0 26px 0 32px; }

.right { width: 472px; padding: 0 6px; }
.help-head { width: 460px; height: 38px; padding-right: 7px; }
.help-head span { top: -3px; }
.help { margin-top: 2px; display: flex; width: 466px; height: 1500px; }
.help-body { width: 420px; background: #323232; padding: 20px 24px 0 16px; }
.help-input { margin-left: 2px; width: 376px; height: 32px; background: #3c3c3c; border: 1px solid #4a4a4a; border-bottom-color: #777; padding-left: 5px; line-height: 30px; letter-spacing: -.3px; }
.auto { margin-top: 11px; height: 30px; display: flex; align-items: center; gap: 8px; }
.auto i { display: grid; place-items: center; }
.web { margin-top: 9px; width: 380px; height: 600px; display: flex; background: #fff; }
.page { width: 350px; overflow: hidden; }
.page-head { height: 274px; background: #c6c6c6; padding: 30px 32px 0; }
.brand { display: flex; justify-content: space-between; align-items: center; }
.search { margin-top: 30px; height: 64px; background: #fff; display: flex; justify-content: space-between; align-items: center; padding: 0 21px 0 19px; font: 400 33px/64px "Liberation Sans", sans-serif; color: #5d5d5d; letter-spacing: -.9px; }
.search span { padding-top: 2px; }
.page h1 { margin: 42px 0 0 32px; font: 700 57px/64px "Liberation Sans", sans-serif; color: #333; }
.sbar { width: 30px; border-left: 2px solid #e4e4e4; background: #fafafa; padding: 6px 0 0 6px; }
.sbar i { width: 16px; height: 590px; border-radius: 8px; background: #c1c1c1; }
.side-tabs { width: 46px; background: #444; }
.side-tabs div { height: 72px; width: 40px; display: grid; place-items: center; }
.side-tabs .active { background: #323232; border-radius: 0 10px 10px 0; }
.wheel { width: 26px; height: 26px; border-radius: 50%; border: 1px solid #111; background: radial-gradient(circle, #444 0 6.500px, #111 7px 7.500px, transparent 8px), conic-gradient(#f00, #ff0 60deg, #2f2 120deg, #0ff 190deg, #00f 250deg, #f0f 305deg, #f00); }
.q { font: 700 20px "Liberation Serif", serif; fill: #fff; }

.bottom { height: 94px; flex: none; padding: 6px 6px; display: flex; flex-direction: column; }
.history { height: 32px; display: flex; background: #323232; overflow: hidden; border-radius: 10px 0 0 0; }
.hgrip { width: 42px; border-right: 2px solid #484848; display: flex; flex-direction: column; gap: 6px; padding: 6px 0 0 16px; }
.lines { padding-left: 10px; font-size: 24px; line-height: 30px; font-weight: 400; color: #c8c8c8; letter-spacing: -.75px; }
.old { height: 3px; display: flex; align-items: flex-end; }
.old span { margin-bottom: -2px; }
.old span:nth-child(1) { margin-left: 122px; }
.old span:nth-child(2) { margin-left: 199px; }
.old span:nth-child(3) { margin-left: 272px; }
.old span:nth-child(4) { margin-left: 315px; letter-spacing: .4px; }
.status { height: 50px; background: #323232; display: flex; align-items: center; color: #bcbcbc; font-weight: 400; font-size: 22px; white-space: pre; padding-left: 10px; }
.s-pane { margin-right: 13px; }
.s-list { margin-right: 38px; }
.status span { letter-spacing: .1px; padding-top: 1px; }
.status .s-cplane { width: 191px; }
.status .s-xyz { width: 396px; letter-spacing: .2px; }
.status .s-mm { width: 166px; }
.status .s-layer { width: 237px; display: flex; align-items: center; gap: 13px; }
.s-layer i { width: 32px; height: 32px; background: #000; border: 2px solid #eee; }
.status .s-grid { width: 145px; }
.status .s-ortho { width: 102px; }
.status .s-planar { width: 88px; }
.status b { height: 38px; line-height: 39px; width: 102px; margin-right: 6px; border-radius: 5px; background: #1e1e1e; color: #e2e2e2; text-align: center; letter-spacing: -.1px; }
.status .s-smart { width: 160px; letter-spacing: .2px; }

.window { position: absolute; left: 1739px; top: 560px; width: 1141px; height: 1146px; z-index: 3; background: #444; border-radius: 18px; border: 1px solid #000; box-shadow: inset 0 0 0 1.500px #777, 0 0 30px rgba(0,0,0,.4), 0 16px 50px rgba(0,0,0,.25); padding: 0 9px 10px 10px; display: flex; flex-direction: column; }
.w-title { height: 49px; flex: none; display: flex; padding-top: 3px; }
.close { width: 18px; height: 18px; border-radius: 50%; background: #ff5f57; margin: 6px 21px 0 0; }
.w-tab { width: 216px; height: 46px; background: #323232; border-radius: 10px 10px 0 0; display: flex; align-items: center; gap: 9px; padding: 2px 0 0 21px; letter-spacing: -.1px; }
.w-tab svg { margin-top: -8px; }
.dots { flex: 1; display: flex; justify-content: flex-end; gap: 6px; padding: 20px 16px 0 0; }
.w-body { flex: 1; background: #323232; display: flex; flex-direction: column; min-height: 0; }
.w-tools { height: 63px; flex: none; display: flex; padding: 11px 4px 0 1px; gap: 2px; }
.w-tools button { width: 50px; height: 40px; padding: 0; border: 0; border-top: 1px solid #7d7d7d; border-radius: 9px; background: #626262; display: grid; place-items: center; box-shadow: 0 1px 2px rgba(0,0,0,.3); }
.w-tools .sel { background: #0077d8; border-top-color: #2a92ea; }
.w-tools .pencil { width: 52px; margin-left: auto; }
.w-content { flex: 1; display: flex; min-height: 0; }
.groups { width: 1096px; padding: 7px 7px 0 8px; }
.group { background: #b0b0b0; border: 2px solid #050505; border-radius: 7px; margin-bottom: 7px; padding: 0 6px 6px; }
.g-head { height: 38px; display: flex; align-items: center; gap: 9px; padding-left: 5px; color: #000; font: 400 20px/30px Inter, sans-serif; letter-spacing: .17px; }
.g-head span { padding-top: 1px; }
.g-head i { width: 22px; height: 22px; border: 2px solid #000; background: linear-gradient(#777, #333 40%, #666); display: grid; place-items: center; margin-top: -2px; }
.rows { border: 2px solid #050505; background: #404040; padding: 6px 5px 5px 6px; display: grid; gap: 8px; box-shadow: inset 0 0 8px rgba(0,0,0,.3); }
.row { position: relative; height: 38px; border: 4px solid #dedede; display: flex; padding: 0 0 0 14px; font: 700 20px/32px Inter, sans-serif; letter-spacing: .52px; color: #e2e2e2; }
.row::before { content: ""; position: absolute; inset: -4px; border: 1px solid #a4a4a4; }
.row::after { content: ""; position: absolute; inset: -1px; border: 1px solid #a4a4a4; }
.row span { padding-top: 1px; }
.end { justify-content: flex-end; }
.row em { position: absolute; z-index: 1; top: -2px; margin-left: -4px; height: 34px; border: 2px solid #f0f0f0; background: #404040; font: 400 23px/28px "Liberation Sans", sans-serif; letter-spacing: -.4px; text-align: center; box-shadow: inset 0 0 2px rgba(0,0,0,.5); padding-right: 1px; }
.w-scroll { width: 24px; border: 4px solid #f0f0f0; border-width: 4px 3px 3px 4px; background: linear-gradient(90deg, #555, #777); display: grid; grid-template-columns: 4px 4px; gap: 2px; justify-content: end; align-content: center; padding-right: 1px; }
.w-scroll i { width: 4px; height: 4px; background: #eee; }
```
